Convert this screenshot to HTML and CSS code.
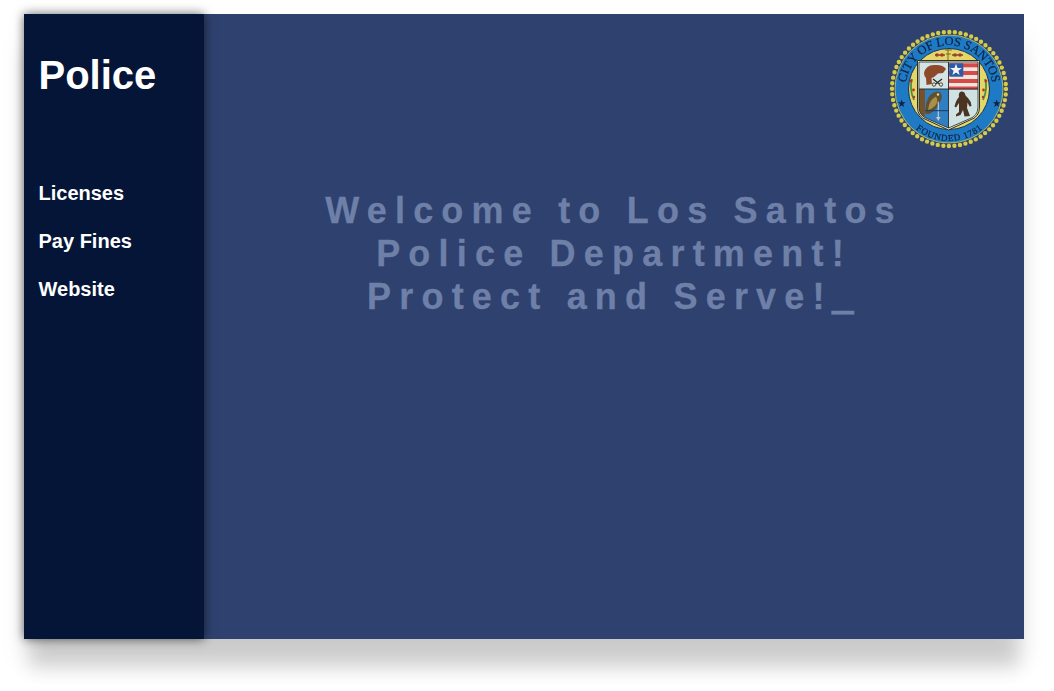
FILE: index.html
```html
<!DOCTYPE html>
<html lang="en">
<head>
<meta charset="utf-8">
<title>Police</title>
<link rel="stylesheet" href="styles.css">
</head>
<body>
<div class="tablet">
  <aside class="sidebar">
    <h1 class="brand">Police</h1>
    <nav class="nav">
      <a class="nav-link" href="#">Licenses</a>
      <a class="nav-link" href="#">Pay Fines</a>
      <a class="nav-link" href="#">Website</a>
    </nav>
  </aside>
  <main class="main">
    <svg class="seal" viewBox="0 0 120 120" width="120" height="120" aria-label="City of Los Santos seal">
      <defs>
        <path id="arcTop" d="M16.500 60a43.500 43.500 0 0 1 87 0"/>
        <path id="arcBottom" d="M8 60a52 52 0 0 0 104 0"/>
        <clipPath id="shieldClip"><path d="M30 33H89V78Q89 87 80 90L59.500 99 39 90Q30 87 30 78Z"/></clipPath>
      </defs>
      <circle cx="60" cy="60" r="57" fill="none" stroke="#d6cb45" stroke-width="4.400" stroke-dasharray="0 5.594" stroke-linecap="round"/>
      <circle cx="60" cy="60" r="54" fill="#1f7ac6" stroke="#b3b45a" stroke-width="1"/>
      <circle cx="60" cy="60" r="40.500" fill="#e2d768" stroke="#15345a" stroke-width="1"/>
      <text class="seal-text top"><textPath href="#arcTop" startOffset="50%" text-anchor="middle" textLength="124">CITY OF LOS SANTOS</textPath></text>
      <text class="seal-text bottom"><textPath href="#arcBottom" startOffset="50%" text-anchor="middle" textLength="72">FOUNDED 1781</textPath></text>
      <path d="M12.700 70.500l1 2.700 2.900.1-2.300 1.800.8 2.800-2.400-1.600-2.400 1.600.8-2.800-2.300-1.800 2.900-.1Z" fill="#10233f"/>
      <path d="M107.700 70.500l1 2.700 2.900.1-2.300 1.800.8 2.800-2.400-1.600-2.400 1.600.8-2.800-2.300-1.800 2.900-.1Z" fill="#10233f"/>
      <g fill="none" stroke="#4f8a3e" stroke-width="1.700">
        <path d="M23 50Q20 60 25 71"/>
        <path d="M96 50Q99 60 94 71"/>
        <path d="M46 26H56M63 26H74" stroke="#4f6a2c"/>
      </g>
      <g fill="#b4352c">
        <circle cx="22" cy="52" r="1.400"/><circle cx="24.500" cy="61" r="1.400"/><circle cx="25" cy="68" r="1.200"/>
        <circle cx="97" cy="52" r="1.400"/><circle cx="94.500" cy="61" r="1.400"/><circle cx="94" cy="68" r="1.200"/>
        <circle cx="48" cy="26" r="1.800"/><circle cx="53" cy="26" r="1.800"/><circle cx="66" cy="26" r="1.800"/><circle cx="71" cy="26" r="1.800"/>
      </g>
      <path d="M59 20V33M56 21H63M57 25H62" fill="none" stroke="#7a6626" stroke-width="1"/>
      <path d="M28.500 31.500H90.500V78Q90.500 88 81 91L59.500 101 38 91Q28.500 88 28.500 78Z" fill="#ece8c8" stroke="#2b2f2c" stroke-width="1"/>
      <g clip-path="url(#shieldClip)">
        <rect x="30" y="33" width="29.500" height="27" fill="#d4e3e4"/>
        <rect x="59.500" y="33" width="30" height="27" fill="#ece6dc"/>
        <rect x="30" y="60" width="29.500" height="40" fill="#2f7fc2"/>
        <rect x="59.500" y="60" width="30" height="40" fill="#cfe2e4"/>
        <rect x="59.500" y="34.300" width="30" height="4" fill="#d84a4a"/>
        <rect x="59.500" y="42" width="30" height="4" fill="#d84a4a"/>
        <rect x="59.500" y="50" width="30" height="4" fill="#d84a4a"/>
        <rect x="59.500" y="57.500" width="30" height="3" fill="#d84a4a"/>
        <rect x="60.300" y="34.300" width="14" height="13.400" fill="#2e5aa6"/>
        <path d="M67 34.800l1.500 4.200 4.400.1-3.500 2.700 1.200 4.300-3.600-2.500-3.600 2.500 1.200-4.300-3.500-2.700 4.400-.1Z" fill="#f4f4f4"/>
        <path d="M35 44Q37 35.500 46 36Q54 35.500 57 40L54 44L49 44.500L45 48L42.500 49L43 55L37.500 56L37 49Q35 47 35 44Z" fill="#8c4a2a"/>
        <path d="M44 50L53 57M53 50L44 57" stroke="#2d2a25" stroke-width="1.300"/>
        <circle cx="45" cy="55.500" r="1.700" fill="#ece8c8" stroke="#2d2a25" stroke-width=".8"/>
        <circle cx="52" cy="55.500" r="1.700" fill="#ece8c8" stroke="#2d2a25" stroke-width=".8"/>
        <rect x="30" y="60" width="6" height="27" fill="#76522a"/>
        <path d="M36.500 85Q36 72 41 66Q46 61 51 63Q54 66 52 71Q48 81 40 85Z" fill="#5f5030"/>
        <path d="M39 81Q40 71 47 67.500Q50 72 46 77Q43 80 39 81Z" fill="#a98f48"/>
        <circle cx="49" cy="65.500" r="1.200" fill="#e7dca0"/>
        <path d="M49.300 72.700V90" fill="none" stroke="#c5cacc" stroke-width="1.200"/>
        <path d="M49.300 92l-2.300-4h4.600Z" fill="#c5cacc"/>
        <path d="M36 81.700H59" stroke="#193a63" stroke-width="1"/>
        <path d="M72.500 62.500Q76 62.500 76.500 66.500L79 69Q82 72 82.500 77L80.500 77.500L78.500 73.500L78 79L81 87L75.500 87.500L74 81L71.500 86L67 87.500L67 85.500L70 83L70 74L67 78.500L65.500 77.500Q67 71 70 68Q69 63 72.500 62.500Z" fill="#4a3320"/>
      </g>
      <path d="M59.500 33V99M30 60H89" stroke="#22262a" stroke-width=".9"/>
      <path d="M30 33H89V78Q89 87 80 90L59.500 99 39 90Q30 87 30 78Z" fill="none" stroke="#23282b" stroke-width=".8"/>
    </svg>
    <h2 class="welcome">Welcome to Los Santos<br>Police Department!<br>Protect and Serve!<span class="cursor">_</span></h2>
  </main>
</div>
</body>
</html>
```
FILE: styles.css
```css
html, body {
  margin: 0;
  padding: 0;
  height: 100%;
  background: #fff;
  overflow: hidden;
}

body {
  padding: 14px 0 0 24px;
  box-sizing: border-box;
  font-family: "Liberation Sans", Arial, sans-serif;
}

.tablet {
  width: 1000px;
  height: 625px;
  display: flex;
  background: #2f416f;
  box-shadow: 0 33px 18px -5px rgba(0, 0, 0, 0.16), 0 22px 30px rgba(0, 0, 0, 0.06);
}

.sidebar {
  width: 180px;
  flex: none;
  padding: 0 14.5px;
  box-sizing: border-box;
  background: #051538;
  box-shadow: 0 0 10px rgba(0, 0, 0, 0.6);
  position: relative;
}

.brand {
  margin: 0;
  padding-top: 38px;
  font-size: 40px;
  line-height: 46px;
  font-weight: 700;
  color: #fff;
}

.nav {
  display: flex;
  flex-direction: column;
  gap: 25px;
  margin-top: 84px;
}

.nav-link {
  font-size: 20px;
  line-height: 23px;
  font-weight: 700;
  color: #fff;
  text-decoration: none;
}

.main {
  flex: 1;
  position: relative;
  padding-top: 175px;
  text-align: center;
}

.seal {
  position: absolute;
  top: 15px;
  right: 15px;
  filter: blur(0.35px);
}

.seal-text {
  font-family: "Liberation Serif", serif;
  fill: #0f2340;
  stroke: #0f2340;
  stroke-width: 0.2px;
}

.seal-text.top {
  font-size: 12.5px;
}

.seal-text.bottom {
  font-size: 9px;
}

.welcome {
  margin: 0;
  font-size: 36px;
  line-height: 43px;
  font-weight: 700;
  letter-spacing: 8.2px;
  color: #6e80a8;
  -webkit-text-stroke: 0.3px #6e80a8;
}

.cursor {
  -webkit-text-stroke: 2.2px #6e80a8;
}
```
